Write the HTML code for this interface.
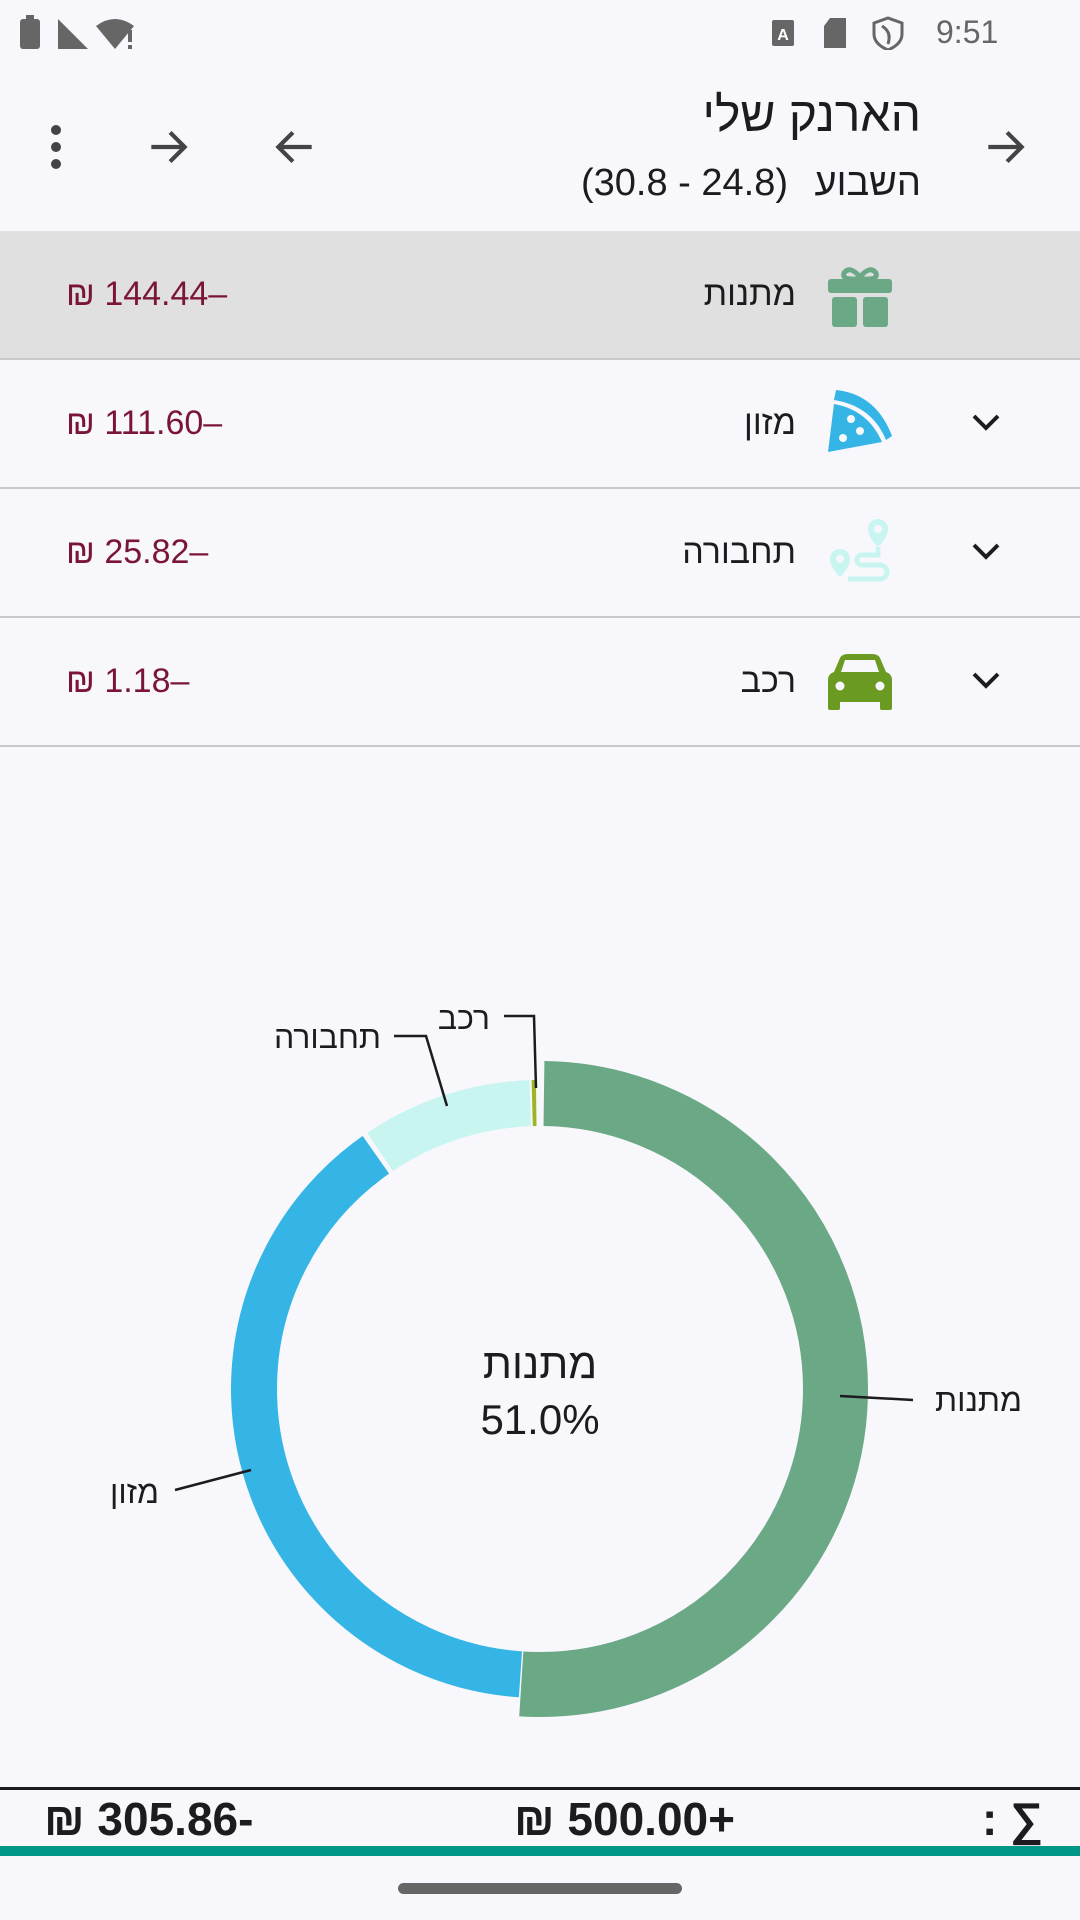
<!DOCTYPE html>
<html><head><meta charset="utf-8"><style>
*{margin:0;padding:0;box-sizing:border-box}
body{width:1080px;height:1920px;background:#f7f7fc;font-family:"Liberation Sans","Noto Sans CJK SC",sans-serif;position:relative;overflow:hidden;color:#1c1b1f}
.a{position:absolute;white-space:nowrap}
.row{position:absolute;left:0;width:1080px;border-bottom:2px solid #c9c9cc}
.cat{position:absolute;right:284px;font-size:34px;direction:rtl}
.amt{position:absolute;left:66px;font-size:34px;color:#7b1538}
.chev{position:absolute;left:968px}
.lbl{position:absolute;font-size:32px;direction:rtl;white-space:nowrap}
</style></head><body>
<!-- status bar -->
<svg class="a" style="left:18px;top:14px" width="120" height="36" viewBox="0 0 120 36">
<rect x="2" y="5" width="20" height="30" rx="3" fill="#666"/><rect x="8" y="1" width="8" height="5" fill="#666"/>
<polygon points="40,5 40,35 70,35" fill="#666"/>
<path d="M78 12 Q97 -2 116 12 L97 35 Z" fill="#666"/><rect x="110" y="16" width="4" height="12" fill="#666"/><rect x="110" y="31" width="4" height="4" fill="#666"/>
</svg>
<svg class="a" style="left:770px;top:14px" width="150" height="36" viewBox="0 0 150 36">
<rect x="2" y="6" width="22" height="26" rx="2" fill="#666"/><text x="13" y="26" font-size="16" fill="#fff" text-anchor="middle" font-family="Liberation Sans" font-weight="bold">A</text>
<path d="M60 4 H76 V34 H54 V12 Z" fill="#666"/>
<path d="M118 4 L132 9 V20 Q132 30 118 36 Q104 30 104 20 V9 Z" fill="none" stroke="#666" stroke-width="3"/><path d="M112 12 Q122 18 118 30" fill="none" stroke="#666" stroke-width="3"/>
</svg>
<div class="a" style="left:936px;top:14px;font-size:32px;color:#666">9:51</div>
<!-- header -->
<svg class="a" style="left:980px;top:122px" width="50" height="50" viewBox="0 0 24 24"><path d="M4 12H20M13 5L20 12L13 19" fill="none" stroke="#444" stroke-width="2"/></svg>
<div class="a" style="right:159px;top:88px;font-size:48px;direction:rtl">הארנק שלי</div>
<div class="a" style="right:159px;top:162px;font-size:38px;direction:rtl">השבוע</div>
<div class="a" style="right:292px;top:162px;font-size:38px;direction:ltr">(30.8 - 24.8)</div>
<svg class="a" style="left:270px;top:122px" width="50" height="50" viewBox="0 0 24 24"><path d="M20 12H4M11 5L4 12L11 19" fill="none" stroke="#444" stroke-width="2"/></svg>
<svg class="a" style="left:143px;top:122px" width="50" height="50" viewBox="0 0 24 24"><path d="M4 12H20M13 5L20 12L13 19" fill="none" stroke="#444" stroke-width="2"/></svg>
<svg class="a" style="left:46px;top:124px" width="20" height="46" viewBox="0 0 20 46"><circle cx="10" cy="6" r="5" fill="#444"/><circle cx="10" cy="23" r="5" fill="#444"/><circle cx="10" cy="40" r="5" fill="#444"/></svg>
<!-- rows -->
<div class="row" style="top:231px;height:129px;background:#e0e0e0">
<svg class="a" style="left:828px;top:32px" width="64" height="64" viewBox="0 0 64 64"><path d="M16 10 Q22 2 32 14 Q42 2 48 10 Q50 16 40 16 H24 Q14 16 16 10Z" fill="none" stroke="#6aa886" stroke-width="5"/><rect x="0" y="16" width="64" height="14" rx="3" fill="#6aa886"/><rect x="4" y="34" width="25" height="30" rx="3" fill="#6aa886"/><rect x="35" y="34" width="25" height="30" rx="3" fill="#6aa886"/></svg>
<div class="cat" style="top:44px">מתנות</div><div class="amt" style="top:44px">₪ 144.44–</div>
</div>
<div class="row" style="top:360px;height:129px">
<svg class="a" style="left:828px;top:30px" width="64" height="66" viewBox="0 0 64 66"><path d="M8 0 Q48 4 64 46 L58 50 Q44 16 6 10 Z M6 14 Q40 20 54 52 L0 62 Z" fill="#35b5e5"/><circle cx="23" cy="29" r="4" fill="#f7f7fc"/><circle cx="32" cy="41" r="4" fill="#f7f7fc"/><circle cx="15" cy="48" r="4" fill="#f7f7fc"/></svg>
<div class="cat" style="top:44px">מזון</div><div class="amt" style="top:44px">₪ 111.60–</div>
<svg class="chev" style="top:44px" width="36" height="36" viewBox="0 0 24 24"><path d="M4 8L12 16L20 8" fill="none" stroke="#1c1b1f" stroke-width="2.6"/></svg>
</div>
<div class="row" style="top:489px;height:129px">
<svg class="a" style="left:828px;top:30px" width="64" height="64" viewBox="0 0 64 64"><path d="M50 0 A10 10 0 0 1 60 10 Q60 18 50 28 Q40 18 40 10 A10 10 0 0 1 50 0Z M12 30 A10 10 0 0 1 22 40 Q22 48 12 58 Q2 48 2 40 A10 10 0 0 1 12 30Z" fill="#c8f5f0"/><path d="M50 28 V36 H34 A5 5 0 0 0 34 46 H52 A7 7 0 0 1 52 60 H20" fill="none" stroke="#c8f5f0" stroke-width="5"/><circle cx="50" cy="10" r="4" fill="#f7f7fc"/><circle cx="12" cy="40" r="4" fill="#f7f7fc"/></svg>
<div class="cat" style="top:44px">תחבורה</div><div class="amt" style="top:44px">₪ 25.82–</div>
<svg class="chev" style="top:44px" width="36" height="36" viewBox="0 0 24 24"><path d="M4 8L12 16L20 8" fill="none" stroke="#1c1b1f" stroke-width="2.6"/></svg>
</div>
<div class="row" style="top:618px;height:129px">
<svg class="a" style="left:828px;top:36px" width="64" height="56" viewBox="0 0 64 56"><path d="M12 4 Q14 0 20 0 H44 Q50 0 52 4 L58 18 Q64 20 64 26 V54 Q64 56 62 56 H54 Q52 56 52 54 V48 H12 V54 Q12 56 10 56 H2 Q0 56 0 54 V26 Q0 20 6 18 Z" fill="#6b9a22"/><path d="M13 18 L17 6 H47 L51 18 Z" fill="#f7f7fc"/><circle cx="12" cy="32" r="4.5" fill="#f7f7fc"/><circle cx="52" cy="32" r="4.5" fill="#f7f7fc"/></svg>
<div class="cat" style="top:44px">רכב</div><div class="amt" style="top:44px">₪ 1.18–</div>
<svg class="chev" style="top:44px" width="36" height="36" viewBox="0 0 24 24"><path d="M4 8L12 16L20 8" fill="none" stroke="#1c1b1f" stroke-width="2.6"/></svg>
</div>
<!-- chart -->
<svg class="a" style="left:0;top:0" width="1080" height="1920">
<g transform="rotate(-90 540 1389)">
<circle cx="540" cy="1389" r="295.5" fill="none" stroke="#6aa886" stroke-width="65" stroke-dasharray="943 2000" stroke-dashoffset="-4"/>
<circle cx="540" cy="1389" r="286" fill="none" stroke="#35b5e5" stroke-width="46" stroke-dasharray="704 2000" stroke-dashoffset="-918"/>
<circle cx="540" cy="1389" r="286" fill="none" stroke="#c8f5f0" stroke-width="46" stroke-dasharray="160 2000" stroke-dashoffset="-1627"/>
<circle cx="540" cy="1389" r="286" fill="none" stroke="#9bb523" stroke-width="46" stroke-dasharray="4 2000" stroke-dashoffset="-1789"/>
</g>
<g stroke="#1c1b1f" stroke-width="2.5" fill="none">
<polyline points="840,1396 913,1400"/>
<polyline points="175,1490 251,1470"/>
<polyline points="394,1036 426,1036 447,1106"/>
<polyline points="504,1016 534,1016 536,1088"/>
</g>
</svg>
<div class="lbl" style="right:58px;top:1382px">מתנות</div>
<div class="lbl" style="right:921px;top:1474px">מזון</div>
<div class="lbl" style="right:699px;top:1019px">תחבורה</div>
<div class="lbl" style="right:590px;top:1000px">רכב</div>
<div class="lbl" style="left:0;width:1080px;text-align:center;top:1340px;font-size:42px">מתנות</div>
<div class="a" style="left:0;width:1080px;text-align:center;top:1396px;font-size:42px">51.0%</div>
<!-- bottom -->
<div class="a" style="left:0;top:1787px;width:1080px;height:3px;background:#1c1b1f"></div>
<div class="a" style="left:44px;top:1792px;font-size:46px;font-weight:bold">₪ 305.86-</div>
<div class="a" style="left:514px;top:1792px;font-size:46px;font-weight:bold">₪ 500.00+</div>
<div class="a" style="left:982px;top:1792px;font-size:46px;font-weight:bold">: ∑</div>
<div class="a" style="left:0;top:1846px;width:1080px;height:10px;background:#009688"></div>
<div class="a" style="left:398px;top:1883px;width:284px;height:11px;border-radius:6px;background:#666"></div>
</body></html>
